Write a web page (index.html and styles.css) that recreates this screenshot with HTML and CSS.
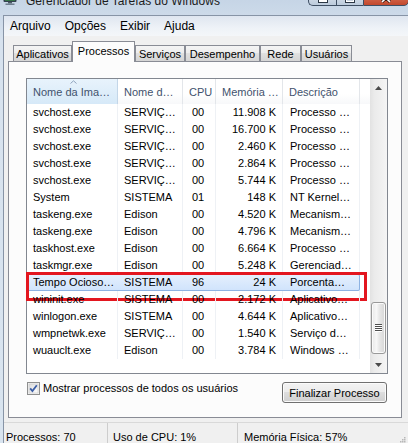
FILE: index.html
```html
<!DOCTYPE html>
<html lang="pt-BR">
<head>
<meta charset="utf-8">
<title>Gerenciador de Tarefas do Windows</title>
<link rel="stylesheet" href="styles.css">
</head>
<body>
<div class="window">
  <div class="titlebar">
    <div class="title-left">
      <svg class="app-icon" viewBox="0 0 14 14" width="14" height="14">
        <rect x="0.5" y="0.5" width="13" height="10.5" rx="1" fill="#33414f"/>
        <rect x="2" y="2" width="10" height="7.5" fill="#3aa845"/>
        <polyline points="2,8 4,6 6,7 8,4 10,6 12,5" fill="none" stroke="#c9f5c0" stroke-width="0.8"/>
        <rect x="5" y="11" width="4" height="1.5" fill="#4d5a66"/>
        <rect x="2.5" y="12.5" width="9" height="1.5" fill="#6f7f8f"/>
      </svg>
      <span class="title">Gerenciador de Tarefas do Windows</span>
    </div>
    <div class="caption">
      <span class="cb cb-min"><i class="g-min"></i></span>
      <span class="cb cb-max"><i class="g-max"></i></span>
      <span class="cb cb-close">
        <svg class="g-close" viewBox="0 0 12 10" width="12" height="10"><path d="M2 1 L10 9 M10 1 L2 9" stroke="#3a1a12" stroke-width="3"/><path d="M2 1 L10 9 M10 1 L2 9" stroke="#ffffff" stroke-width="1.6"/></svg>
      </span>
    </div>
  </div>

  <div class="client">
    <div class="menubar">
      <span>Arquivo</span>
      <span>Opções</span>
      <span>Exibir</span>
      <span>Ajuda</span>
    </div>

    <div class="tabs">
      <span class="tab t-apps">Aplicativos</span>
      <span class="tab t-proc active">Processos</span>
      <span class="tab t-serv">Serviços</span>
      <span class="tab t-des">Desempenho</span>
      <span class="tab t-rede">Rede</span>
      <span class="tab t-usr">Usuários</span>
    </div>

    <div class="panel">
      <div class="listview">
        <div class="lv-main">
          <div class="lv-header">
            <div class="hcell c1 sorted">
              <svg class="sort-arrow" viewBox="0 0 7 4" width="7" height="4"><polyline points="0.5,3.5 3.5,0.8 6.5,3.5" fill="none" stroke="#8fa3bd" stroke-width="1"/></svg>
              Nome da Ima…
            </div>
            <div class="hcell c2">Nome d…</div>
            <div class="hcell c3">CPU</div>
            <div class="hcell c4">Memória …</div>
            <div class="hcell c5">Descrição</div>
            <div class="hcell hfill"></div>
          </div>
          <div class="lv-body">
            <div class="row"><span class="cell c1">svchost.exe</span><span class="cell c2">SERVIÇ…</span><span class="cell c3">00</span><span class="cell c4">11.908 K</span><span class="cell c5">Processo …</span></div>
            <div class="row"><span class="cell c1">svchost.exe</span><span class="cell c2">SERVIÇ…</span><span class="cell c3">00</span><span class="cell c4">16.700 K</span><span class="cell c5">Processo …</span></div>
            <div class="row"><span class="cell c1">svchost.exe</span><span class="cell c2">SERVIÇ…</span><span class="cell c3">00</span><span class="cell c4">2.460 K</span><span class="cell c5">Processo …</span></div>
            <div class="row"><span class="cell c1">svchost.exe</span><span class="cell c2">SERVIÇ…</span><span class="cell c3">00</span><span class="cell c4">2.864 K</span><span class="cell c5">Processo …</span></div>
            <div class="row"><span class="cell c1">svchost.exe</span><span class="cell c2">SERVIÇ…</span><span class="cell c3">00</span><span class="cell c4">5.744 K</span><span class="cell c5">Processo …</span></div>
            <div class="row"><span class="cell c1">System</span><span class="cell c2">SISTEMA</span><span class="cell c3">01</span><span class="cell c4">148 K</span><span class="cell c5">NT Kernel…</span></div>
            <div class="row"><span class="cell c1">taskeng.exe</span><span class="cell c2">Edison</span><span class="cell c3">00</span><span class="cell c4">4.520 K</span><span class="cell c5">Mecanism…</span></div>
            <div class="row"><span class="cell c1">taskeng.exe</span><span class="cell c2">Edison</span><span class="cell c3">00</span><span class="cell c4">4.796 K</span><span class="cell c5">Mecanism…</span></div>
            <div class="row"><span class="cell c1">taskhost.exe</span><span class="cell c2">Edison</span><span class="cell c3">00</span><span class="cell c4">6.664 K</span><span class="cell c5">Processo …</span></div>
            <div class="row"><span class="cell c1">taskmgr.exe</span><span class="cell c2">Edison</span><span class="cell c3">00</span><span class="cell c4">5.248 K</span><span class="cell c5">Gerenciad…</span></div>
            <div class="row sel"><span class="cell c1">Tempo Ocioso…</span><span class="cell c2">SISTEMA</span><span class="cell c3">96</span><span class="cell c4">24 K</span><span class="cell c5">Porcenta…</span></div>
            <div class="row"><span class="cell c1">wininit.exe</span><span class="cell c2">SISTEMA</span><span class="cell c3">00</span><span class="cell c4">2.172 K</span><span class="cell c5">Aplicativo…</span></div>
            <div class="row"><span class="cell c1">winlogon.exe</span><span class="cell c2">SISTEMA</span><span class="cell c3">00</span><span class="cell c4">4.644 K</span><span class="cell c5">Aplicativo…</span></div>
            <div class="row"><span class="cell c1">wmpnetwk.exe</span><span class="cell c2">SERVIÇ…</span><span class="cell c3">00</span><span class="cell c4">1.540 K</span><span class="cell c5">Serviço d…</span></div>
            <div class="row"><span class="cell c1">wuauclt.exe</span><span class="cell c2">Edison</span><span class="cell c3">00</span><span class="cell c4">3.784 K</span><span class="cell c5">Windows …</span></div>
          </div>
        </div>
        <div class="scrollbar">
          <div class="sb-btn">
            <svg viewBox="0 0 7 4" width="7" height="4"><polygon points="0,4 3.5,0 7,4" fill="#4a4a4a"/></svg>
          </div>
          <div class="sb-track">
            <div class="sb-thumb">
              <svg viewBox="0 0 7 8" width="7" height="8">
                <rect x="0" y="0" width="7" height="1" fill="#4e4e4e"/>
                <rect x="0" y="2" width="7" height="1" fill="#4e4e4e"/>
                <rect x="0" y="4" width="7" height="1" fill="#4e4e4e"/>
                <rect x="0" y="6" width="7" height="1" fill="#4e4e4e"/>
                <rect x="0" y="1" width="7" height="1" fill="#ffffff"/>
                <rect x="0" y="3" width="7" height="1" fill="#ffffff"/>
                <rect x="0" y="5" width="7" height="1" fill="#ffffff"/>
                <rect x="0" y="7" width="7" height="1" fill="#ffffff"/>
              </svg>
            </div>
          </div>
          <div class="sb-btn">
            <svg viewBox="0 0 7 4" width="7" height="4"><polygon points="0,0 3.5,4 7,0" fill="#4a4a4a"/></svg>
          </div>
        </div>
      </div>

      <div class="panel-footer">
        <label class="check">
          <svg class="checkbox" viewBox="0 0 13 13" width="13" height="13">
            <defs>
              <linearGradient id="cbg" x1="0" y1="0" x2="1" y2="1">
                <stop offset="0" stop-color="#dcdcdc"/>
                <stop offset="1" stop-color="#ffffff"/>
              </linearGradient>
            </defs>
            <rect x="0.5" y="0.5" width="12" height="12" fill="#f4f4f4" stroke="#8e8f8f"/>
            <rect x="2" y="2" width="9" height="9" fill="url(#cbg)" stroke="#c6c6c6" stroke-width="0.6"/>
            <path d="M3.2 6.4 L5.4 9 L9.8 3.2" fill="none" stroke="#3b5ea6" stroke-width="1.8"/>
          </svg>
          <span>Mostrar processos de todos os usuários</span>
        </label>
        <button class="btn" type="button">Finalizar Processo</button>
      </div>
    </div>

    <div class="statusbar">
      <span class="sp sp1">Processos: 70</span>
      <span class="sp sp2">Uso de CPU: 1%</span>
      <span class="sp sp3">Memória Física: 57%</span>
      <svg class="grip" viewBox="0 0 6 6" width="6" height="6">
        <rect x="4" y="0" width="1.5" height="1.5" fill="#b8b8b8"/>
        <rect x="2" y="2" width="1.5" height="1.5" fill="#b8b8b8"/>
        <rect x="4" y="2" width="1.5" height="1.5" fill="#b8b8b8"/>
        <rect x="0" y="4" width="1.5" height="1.5" fill="#b8b8b8"/>
        <rect x="2" y="4" width="1.5" height="1.5" fill="#b8b8b8"/>
        <rect x="4" y="4" width="1.5" height="1.5" fill="#b8b8b8"/>
      </svg>
    </div>
  </div>
</div>
</body>
</html>
```
FILE: styles.css
```css
* { box-sizing: border-box; }

html, body {
  margin: 0;
  padding: 0;
}

body {
  width: 408px;
  height: 443px;
  overflow: hidden;
  font-family: "Liberation Sans", Arial, sans-serif;
  font-size: 11px;
  color: #000;
  background: #d3dfec;
}

.window {
  width: 408px;
  height: 443px;
  display: flex;
  flex-direction: column;
  overflow: hidden;
  background: linear-gradient(#c6d5e6, #d7e2ee 40px, #d9e4ef);
}

/* title bar (mostly off-screen) */
.titlebar {
  height: 15px;
  flex: none;
  display: flex;
  justify-content: space-between;
  align-items: flex-start;
  overflow: hidden;
}

.title-left {
  display: flex;
  align-items: flex-start;
  margin-top: -7px;
  padding-left: 3px;
}

.app-icon {
  flex: none;
  margin-top: -2px;
}

.title {
  margin-left: 9px;
  font-size: 12px;
  line-height: 16px;
  color: #1c1c1c;
  white-space: nowrap;
}

.caption {
  display: flex;
  height: 21px;
  margin-top: -15px;
  margin-right: -1px;
}

.cb {
  height: 21px;
  border: 1px solid #3e4e63;
  display: flex;
  justify-content: center;
  align-items: flex-end;
  padding-bottom: 2px;
}

.cb-min {
  width: 28px;
  border-right: none;
  border-radius: 0 0 0 5px;
  background: linear-gradient(#edf2f8, #d3dde9 55%, #bccbdc);
}

.cb-max {
  width: 27px;
  border-right: none;
  background: linear-gradient(#edf2f8, #d3dde9 55%, #bccbdc);
}

.cb-close {
  width: 46px;
  border-radius: 0 0 5px 0;
  background: linear-gradient(#eaa592, #d56a4f 55%, #c2482d);
}

.g-min {
  display: block;
  width: 10px;
  height: 4px;
  background: #fff;
  border: 1px solid #2c3846;
}

.g-max {
  display: block;
  width: 10px;
  height: 8px;
  border: 1px solid #2c3846;
  border-top-width: 3px;
  background: transparent;
  box-shadow: inset 0 0 0 1px #fff;
}

.g-close {
  display: block;
}

/* client area */
.client {
  flex: 1;
  min-height: 0;
  display: flex;
  flex-direction: column;
  margin-left: 3px;
  border-left: 1px solid #8794a6;
  border-top: 1px solid #8794a6;
  background: #f0f0f0;
}

.menubar {
  height: 20px;
  flex: none;
  display: flex;
  align-items: center;
  gap: 14px;
  padding-left: 6px;
  font-size: 12px;
  background: linear-gradient(#dfe6f0, #eef2f7 60%, #f4f6f9);
}

/* tabs */
.tabs {
  height: 20px;
  flex: none;
  margin-top: 5px;
  padding-left: 9px;
  display: flex;
  align-items: flex-end;
}

.tab {
  height: 16px;
  flex: none;
  display: flex;
  align-items: center;
  justify-content: center;
  padding-top: 1px;
  border: 1px solid #898c95;
  border-bottom: none;
  background: linear-gradient(#f4f4f4, #ececec 50%, #e0e0e0 50%, #d5d5d5);
  white-space: nowrap;
}

.tab.active {
  height: 21px;
  margin-bottom: -1px;
  padding-top: 0;
  padding-bottom: 3px;
  position: relative;
  z-index: 1;
  background: #fcfcfc;
}

.t-apps { width: 59px; }
.t-proc { width: 63px; }
.t-serv { width: 50px; }
.t-des  { width: 75px; }
.t-rede { width: 41px; }
.t-usr  { width: 51px; }

/* tab panel */
.panel {
  flex: none;
  height: 357px;
  margin: 0 6px 0 4px;
  padding: 16px 13px 0 17px;
  border: 1px solid #898c95;
  background: #fcfcfc;
}

.listview {
  height: 296px;
  display: flex;
  border: 1px solid #828790;
  background: #fff;
}

.lv-main {
  flex: 1;
  min-width: 0;
  display: flex;
  flex-direction: column;
}

.lv-header {
  height: 25px;
  flex: none;
  display: flex;
  background: linear-gradient(#ffffff, #ffffff 60%, #f7f8fa);
}

.hcell {
  position: relative;
  display: flex;
  align-items: center;
  padding-left: 6px;
  padding-top: 1px;
  border-right: 1px solid #e3e6ea;
  color: #3f526d;
  white-space: nowrap;
  overflow: hidden;
}

.hcell.sorted {
  background: linear-gradient(#e8f3fc, #d6e9f8);
  border-right-color: #c3d6e8;
}

.hcell.hfill {
  flex: 1;
  border-right: none;
}

.sort-arrow {
  position: absolute;
  top: 1px;
  left: 43px;
}

.c1 { width: 91px; }
.c2 { width: 65px; }
.c3 { width: 33px; }
.c4 { width: 67px; }
.c5 { width: 77px; }

.lv-body {
  flex: 1;
}

.row {
  position: relative;
  width: 333px;
  height: 17px;
  display: flex;
  line-height: 17px;
}

.cell {
  flex: none;
  padding-left: 6px;
  border-right: 1px solid #eef1f5;
  white-space: nowrap;
  overflow: hidden;
}

.cell.c3 { padding-left: 9px; }

.cell.c4 {
  padding-left: 0;
  padding-right: 6px;
  text-align: right;
}

.cell.c5 { padding-left: 7px; }

.row.sel {
  background: linear-gradient(#e6f0fd, #cfe3fc);
  box-shadow: inset 0 0 0 1px #8db2e2;
  border-radius: 2px;
}

.row.sel .cell {
  border-right-color: transparent;
}

.row.sel::after {
  content: "";
  position: absolute;
  left: -1px;
  top: -2px;
  width: 335px;
  height: 23px;
  border: 3px solid #e3161f;
}

/* scrollbar */
.scrollbar {
  width: 17px;
  flex: none;
  display: flex;
  flex-direction: column;
  background: linear-gradient(90deg, #e2e2e2, #ebebeb 25%, #f1f1f1 75%, #f5f5f5);
}

.sb-btn {
  height: 17px;
  flex: none;
  display: flex;
  align-items: center;
  justify-content: center;
}

.sb-track {
  flex: 1;
  display: flex;
  flex-direction: column;
  justify-content: flex-end;
  padding: 0 1px 2px;
}

.sb-thumb {
  height: 52px;
  display: flex;
  align-items: center;
  justify-content: center;
  border: 1px solid #999999;
  border-radius: 3px;
  background: linear-gradient(90deg, #e9e9e9, #f7f7f7 35%, #e8e8e8 55%, #d6d6d6);
  box-shadow: inset 0 0 0 1px #fafafa;
}

/* footer of the panel */
.panel-footer {
  margin-top: 8px;
  padding: 0 1px;
  display: flex;
  justify-content: space-between;
  align-items: flex-start;
}

.check {
  display: flex;
  align-items: center;
  gap: 3px;
  line-height: 13px;
}

.checkbox {
  flex: none;
}

.btn {
  width: 105px;
  height: 21px;
  padding: 0;
  font-family: "Liberation Sans", Arial, sans-serif;
  font-size: 11px;
  color: #000;
  border: 1px solid #707070;
  border-radius: 3px;
  background: linear-gradient(#f3f3f3, #ebebeb 50%, #dddddd 50%, #cfcfcf);
  box-shadow: inset 0 0 0 1px #fbfbfb;
}

/* status bar */
.statusbar {
  flex: 1;
  margin-top: 4px;
  display: flex;
  border-top: 1px solid #d9d9d9;
}

.sp {
  line-height: 17px;
  padding-top: 6px;
  white-space: nowrap;
}

.sp1 {
  width: 104px;
  padding-left: 2px;
  border-right: 1px solid #cdcdcd;
}

.sp2 {
  width: 130px;
  padding-left: 5px;
  border-right: 1px solid #cdcdcd;
}

.sp3 {
  padding-left: 6px;
}

.grip {
  margin-left: auto;
  margin-right: 2px;
  align-self: flex-end;
  margin-bottom: 3px;
}
```
